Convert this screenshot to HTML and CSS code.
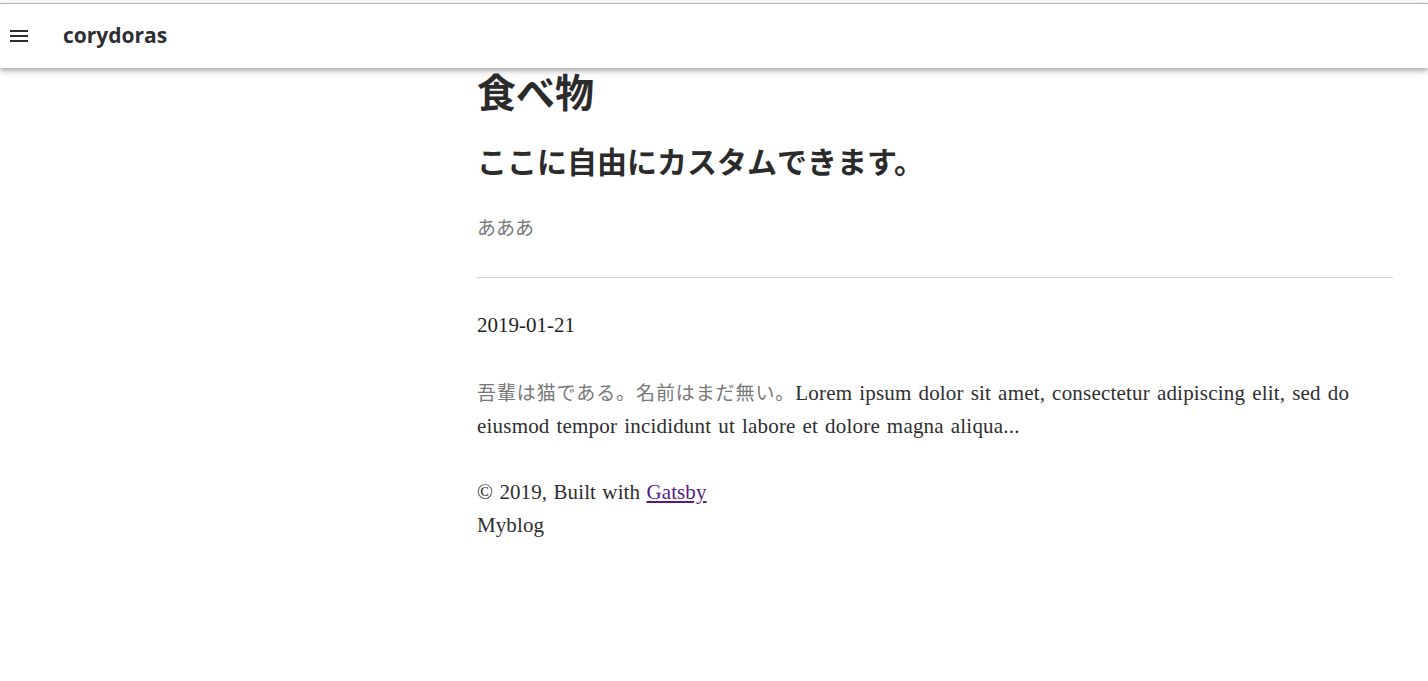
FILE: index.html
```html
<!DOCTYPE html>
<html lang="ja">
<head>
<meta charset="utf-8">
<title>corydoras</title>
<link rel="stylesheet" href="styles.css">
</head>
<body>
<header class="appbar">
  <div class="toolbar">
    <button class="menu-button" aria-label="menu">
      <svg viewBox="0 0 24 24" width="24" height="24"><path d="M3 18h18v-2H3v2zm0-5h18v-2H3v2zm0-7v2h18V6H3z" fill="currentColor"/></svg>
    </button>
    <span class="title">corydoras</span>
  </div>
</header>
<div class="layout">
  <aside class="side"></aside>
  <main class="content">
    <h1 class="page-title">食べ物</h1>
    <h2 class="page-sub">ここに自由にカスタムできます。</h2>
    <p class="desc">あああ</p>
    <hr class="rule">
    <article class="post">
      <small class="date">2019-01-21</small>
      <p class="excerpt"><span class="ja">吾輩は猫である。名前はまだ無い。</span>Lorem ipsum dolor sit amet, consectetur adipiscing elit, sed do eiusmod tempor incididunt ut labore et dolore magna aliqua...</p>
    </article>
    <footer class="foot">
      © 2019, Built with <a href="#" class="link">Gatsby</a><br>Myblog
    </footer>
  </main>
</div>
</body>
</html>
```

FILE: styles.css
```css
html, body {
  margin: 0;
  padding: 0;
  background: #fff;
}
body {
  font-family: "Liberation Serif", "Noto Sans CJK JP", serif;
  color: #2e2e2e;
  padding-top: 3px;
}
.appbar {
  border-top: 1px solid #b5b5b5;
  height: 64px;
  background: #fff;
  box-shadow: 0 2px 4px -1px rgba(0,0,0,0.2), 0 4px 5px 0 rgba(0,0,0,0.14), 0 1px 10px 0 rgba(0,0,0,0.12);
  position: relative;
  z-index: 2;
}
.toolbar {
  display: flex;
  align-items: center;
  height: 64px;
  padding-left: 7px;
}
.menu-button {
  border: 0;
  background: none;
  padding: 0;
  width: 24px;
  height: 24px;
  color: #2b2b2b;
  display: flex;
}
.title {
  margin-left: 32px;
  font-family: "Open Sans", "Noto Sans", sans-serif;
  font-weight: 700;
  font-size: 21px;
  color: #2b2f33;
  margin-top: -2px;
}
.layout {
  display: grid;
  grid-template-columns: 477px 916px;
}
.page-title {
  font-family: "Noto Sans CJK JP", sans-serif;
  font-weight: 700;
  font-size: 39px;
  line-height: 44px;
  margin: 0;
  color: #2b2b2b;
}
.page-sub {
  font-family: "Noto Sans CJK JP", sans-serif;
  font-weight: 700;
  font-size: 30px;
  line-height: 36px;
  margin: 30px 0 0;
  color: #2b2b2b;
}
.desc {
  font-family: "Noto Sans CJK JP", sans-serif;
  font-weight: 400;
  font-size: 19px;
  line-height: 33px;
  color: #777;
  margin: 32px 0 0;
}
.rule {
  border: 0;
  height: 1px;
  background: #d0d0d0;
  margin: 34px 0 0;
}
.post {
  margin-top: 31px;
}
.date {
  display: block;
  font-size: 21px;
  line-height: 33px;
  color: #1f1f1f;
}
.excerpt {
  font-size: 21px;
  line-height: 33px;
  letter-spacing: 0.2px;
  word-spacing: 1.5px;
  margin: 33px 0 0;
  color: #2e2e2e;
}
.ja {
  font-family: "Noto Sans CJK JP", sans-serif;
  font-size: 19px;
  color: #777;
  letter-spacing: 0.9px;
  word-spacing: 0;
}
.foot {
  font-size: 21px;
  line-height: 33px;
  letter-spacing: 0.1px;
  word-spacing: 1px;
  margin-top: 33px;
  color: #2e2e2e;
}
.link {
  color: #551a8b;
}
```
